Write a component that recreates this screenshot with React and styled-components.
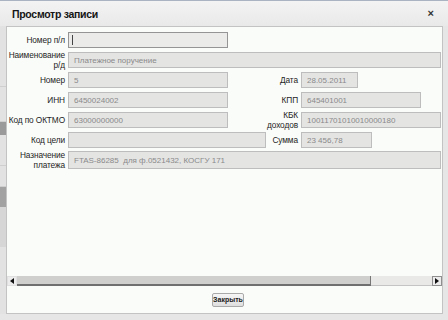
import React from "react";
import styled, { createGlobalStyle } from "styled-components";

const GlobalStyle = createGlobalStyle`
  body {
    margin: 0;
    background: #e4e4e4;
    font-family: "Liberation Sans", Arial, sans-serif;
  }
`;

const Frame = styled.div`
  width: 448px;
  height: 320px;
  display: flex;
  flex-direction: column;
  overflow: hidden;
  background: #e6e6e6;
`;

const TitleBar = styled.div`
  height: 25px;
  border-top: 1px solid #aab3c2;
  background: linear-gradient(#f3f3f3, #e9e9e9);
  display: flex;
  align-items: center;
  justify-content: space-between;
  padding: 0 14px 0 12px;
`;

const Title = styled.div`
  font-size: 10.5px;
  font-weight: bold;
  letter-spacing: -0.3px;
  color: #151515;
`;

const Close = styled.div`
  font-size: 11px;
  font-weight: bold;
  color: #333;
  line-height: 1;
`;

const Main = styled.div`
  height: 288px;
  display: flex;
`;

const Backdrop = styled.div`
  width: 6px;
  display: flex;
  flex-direction: column;
  background: #e2e2e2;
`;

const BackdropPiece = styled.div`
  height: ${(p) => p.h}px;
  background: ${(p) => p.c || "transparent"};
  border-bottom: ${(p) => (p.line ? "1px solid #cfcfcf" : "none")};
`;

const Panel = styled.div`
  width: 437px;
  box-sizing: border-box;
  border: 1px solid #c3c3c3;
  background: #fafcf9;
  display: flex;
  flex-direction: column;
`;

const ScrollArea = styled.div`
  height: 249px;
  box-sizing: border-box;
  overflow: hidden;
  padding-top: 5px;
  display: flex;
  flex-direction: column;
  gap: 4px;
`;

const Row = styled.div`
  height: 16px;
  display: flex;
  align-items: center;
  flex: none;
`;

const Label = styled.div`
  width: ${(p) => p.w || 58}px;
  margin-right: 3px;
  flex: none;
  text-align: right;
  font-size: 8.3px;
  letter-spacing: -0.1px;
  line-height: 10px;
  color: #1e1e1e;
`;

const Field = styled.div`
  width: ${(p) => p.w}px;
  height: ${(p) => p.h || 16}px;
  box-sizing: border-box;
  flex: none;
  display: flex;
  align-items: center;
  padding-left: 5px;
  background: ${(p) => (p.focus ? "#ebebea" : "#e4e4e3")};
  border: 1px solid ${(p) => (p.focus ? "#959595" : "#bdbdbd")};
  font-size: 8px;
  color: #8a8a8a;
  white-space: nowrap;
`;

const Caret = styled.span`
  width: 1px;
  height: 10px;
  margin-left: -2px;
  background: #444;
`;

const Scrollbar = styled.div`
  height: 10px;
  display: flex;
  box-sizing: border-box;
`;

const Arrow = styled.div`
  width: 10px;
  box-sizing: border-box;
  display: flex;
  align-items: center;
  justify-content: center;
  background: #ececec;
  border: 1px solid ${(p) => (p.bordered ? "#8f8f8f" : "#e0e0e0")};
`;

const Thumb = styled.div`
  width: 354px;
  background: #cfd0cd;
  border-bottom: 2px solid #6f6f6f;
  border-right: 1px solid #777;
  box-sizing: border-box;
`;

const Track = styled.div`
  flex: 1;
  background: #e9e9e8;
  border-bottom: 1px solid #c4c4c4;
`;

const Footer = styled.div`
  flex: 1;
  display: flex;
  align-items: center;
  justify-content: center;
  padding-left: 7px;
`;

const Button = styled.button`
  width: 32px;
  height: 14px;
  padding: 0;
  border: 1px solid #a9a9a9;
  border-radius: 2px;
  background: linear-gradient(#f6f6f6, #dedede);
  font-family: "Liberation Sans", Arial, sans-serif;
  font-size: 7px;
  font-weight: bold;
  color: #222;
`;

const Tri = ({ dir }) => (
  <svg width="4" height="6" viewBox="0 0 4 6">
    <path d={dir === "left" ? "M4 0 L0 3 L4 6 Z" : "M0 0 L4 3 L0 6 Z"} fill="#111" />
  </svg>
);

export default function App() {
  return (
    <>
      <GlobalStyle />
      <Frame>
        <TitleBar>
          <Title>Просмотр записи</Title>
          <Close>×</Close>
        </TitleBar>
        <Main>
          <Backdrop>
            <BackdropPiece h={60} line />
            <BackdropPiece h={34} line />
            <BackdropPiece h={13} c="#9a9a9a" />
            <BackdropPiece h={30} line />
            <BackdropPiece h={20} line />
            <BackdropPiece h={20} c="#a2a2a2" />
            <BackdropPiece h={40} c="#d6d6d6" />
          </Backdrop>
          <Panel>
            <ScrollArea>
              <Row>
                <Label>Номер п/л</Label>
                <Field w={160} focus>
                  <Caret />
                </Field>
              </Row>
              <Row>
                <Label>
                  Наименование
                  <br />
                  р/д
                </Label>
                <Field w={373}>Платежное поручение</Field>
              </Row>
              <Row>
                <Label>Номер</Label>
                <Field w={160}>5</Field>
                <Label w={70}>Дата</Label>
                <Field w={57}>28.05.2011</Field>
              </Row>
              <Row>
                <Label>ИНН</Label>
                <Field w={160}>6450024002</Field>
                <Label w={70}>КПП</Label>
                <Field w={120}>645401001</Field>
              </Row>
              <Row>
                <Label>Код по ОКТМО</Label>
                <Field w={160}>63000000000</Field>
                <Label w={70}>
                  КБК
                  <br />
                  доходов
                </Label>
                <Field w={140}>10011701010010000180</Field>
              </Row>
              <Row>
                <Label>Код цели</Label>
                <Field w={198} />
                <Label w={32}>Сумма</Label>
                <Field w={71}>23 456,78</Field>
              </Row>
              <Row>
                <Label>
                  Назначение
                  <br />
                  платежа
                </Label>
                <Field w={373} h={18}>FTAS-86285&nbsp; для ф.0521432, КОСГУ 171</Field>
              </Row>
            </ScrollArea>
            <Scrollbar>
              <Arrow>
                <Tri dir="left" />
              </Arrow>
              <Thumb />
              <Track />
              <Arrow bordered>
                <Tri dir="right" />
              </Arrow>
            </Scrollbar>
            <Footer>
              <Button>Закрыть</Button>
            </Footer>
          </Panel>
        </Main>
      </Frame>
    </>
  );
}
